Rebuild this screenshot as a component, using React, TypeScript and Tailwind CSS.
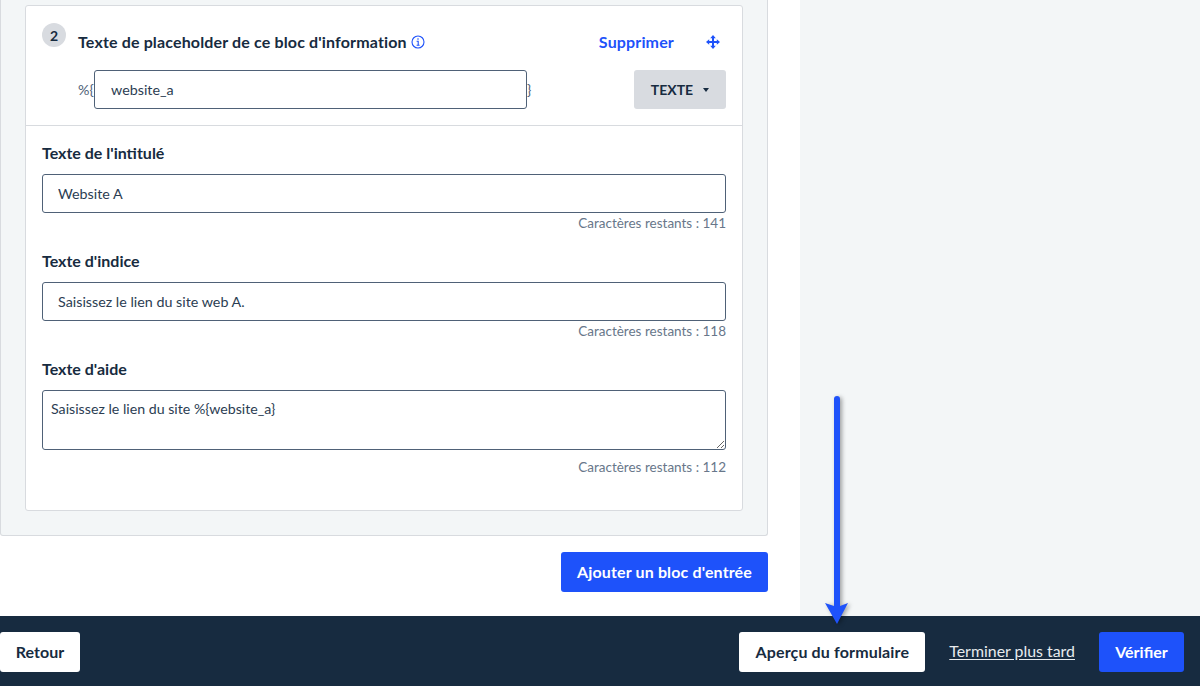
import React from "react";

const F = "font-['Lato','Liberation_Sans',sans-serif]";

function Field({ label, value, count }: { label: string; value: string; count: number }) {
  return (
    <div className="flex flex-col">
      <label className="mb-[11px] text-[16px] leading-[20px] font-bold text-[#172b40]">{label}</label>
      <input
        readOnly
        value={value}
        className="h-[39px] w-full rounded-[3px] border border-[#4f6177] bg-white pb-px pl-[15px] pr-4 text-[14.3px] text-[#2b3d52] outline-none"
      />
      <div className="h-[20px] text-right text-[13.5px] leading-[20px] text-[#68778a]">Caractères restants : {count}</div>
    </div>
  );
}

export default function App() {
  return (
    <div className={`${F} relative flex h-[686px] w-[1200px] flex-col overflow-hidden bg-white`}>
      <main className="flex h-[616px] w-full">
        <section className="w-[800px] bg-white">
          <div className="w-[768px] rounded-b-[3px] border-x border-b border-[#d8dbdf] bg-[#f3f6f7] px-6 pt-[5px] pb-6">
            <div className="rounded-[3px] border border-[#d8dbdf] bg-white">
              <div className="h-[120px] border-b border-[#d8dbdf] px-4 pt-[17px]">
                <div className="flex h-[47px] items-start">
                  <div className="flex h-6 w-6 items-center justify-center rounded-full bg-[#d8dbe0] text-[14px] font-bold text-[#172b40]">2</div>
                  <div className="ml-3 mt-[9px] flex items-center text-[16px] leading-[20px] font-bold tracking-[0.15px] text-[#172b40]">
                    Texte de placeholder de ce bloc d'information
                    <svg className="ml-[4px]" width="14" height="14" viewBox="0 0 14 14" fill="none" stroke="#1e52fa" strokeWidth="1.1">
                      <circle cx="7" cy="7" r="6" />
                      <path d="M5.6 6.2H7.2V10M5.6 10.2H8.6" />
                      <circle cx="7" cy="4" r="0.8" fill="#1e52fa" stroke="none" />
                    </svg>
                  </div>
                  <button className="ml-auto mr-[32px] mt-[9px] text-[16px] leading-[20px] font-bold tracking-[0.15px] text-[#1e52fa]">Supprimer</button>
                  <svg className="mr-[6px] mt-[12px]" width="14" height="14" viewBox="0 0 14 14" fill="#1e52fa">
                    <path d="M7 0 9.8 3.2H8V6H10.8V4.2L14 7 10.8 9.8V8H8V10.8H9.8L7 14 4.2 10.8H6V8H3.2V9.8L0 7 3.2 4.2V6H6V3.2H4.2Z" />
                  </svg>
                </div>
                <div className="flex items-center pl-9">
                  <span className="w-4 text-[14.3px] text-[#4f6177]">%{"{"}</span>
                  <input
                    readOnly
                    value="website_a"
                    className="h-[39px] w-[433px] rounded-[3px] border border-[#4f6177] bg-white px-4 pb-px text-[14.3px] text-[#2b3d52] outline-none"
                  />
                  <span className="text-[14.3px] text-[#4f6177]">{"}"}</span>
                  <button className="ml-auto flex h-[39px] w-[92px] items-center justify-center rounded-[3px] bg-[#d8dbe0] pb-px text-[14px] font-bold text-[#172b40]">
                    TEXTE
                    <svg className="ml-[10px] mt-px" width="6" height="4" viewBox="0 0 6 4" fill="#172b40">
                      <path d="M0 0H6L3 4Z" />
                    </svg>
                  </button>
                </div>
              </div>
              <div className="flex flex-col gap-[18px] px-4 pt-[17px] pb-[33px]">
                <Field label="Texte de l'intitulé" value="Website A" count={141} />
                <Field label="Texte d'indice" value="Saisissez le lien du site web A." count={118} />
                <div className="flex flex-col">
                  <label className="mb-[11px] text-[16px] leading-[20px] font-bold text-[#172b40]">Texte d'aide</label>
                  <textarea
                    readOnly
                    value="Saisissez le lien du site %{website_a}"
                    className="block h-[60px] w-full rounded-[3px] border border-[#4f6177] bg-white px-2 py-[8px] text-[14.2px] leading-[20px] text-[#2b3d52] outline-none"
                  />
                  <div className="mt-[7px] h-[20px] text-right text-[13.5px] leading-[20px] text-[#68778a]">Caractères restants : 112</div>
                </div>
              </div>
            </div>
          </div>
          <div className="mt-4 flex w-[768px] justify-end">
            <button className="h-10 w-[207px] rounded-[3px] bg-[#1e52fa] pb-px text-[16px] font-bold tracking-[0.15px] text-white">Ajouter un bloc d'entrée</button>
          </div>
        </section>
        <aside className="flex-1 bg-[#f3f6f7]" />
      </main>
      <footer className="flex h-[70px] items-start bg-[#172b40] pt-4 pr-4">
        <button className="h-10 w-20 rounded-[3px] bg-white pb-px text-[16px] font-bold text-[#172b40]">Retour</button>
        <button className="ml-auto h-10 w-[186px] rounded-[3px] bg-white pb-px text-[16px] font-bold tracking-[0.15px] text-[#172b40]">Aperçu du formulaire</button>
        <a className="ml-6 mt-[9px] text-[15.9px] leading-[20px] text-[#e8ebee] underline underline-offset-2">Terminer plus tard</a>
        <button className="ml-6 h-10 w-[85px] rounded-[3px] bg-[#1e52fa] pb-px text-[16px] font-bold text-white">Vérifier</button>
      </footer>
      <svg className="absolute left-[820px] top-[392px] drop-shadow-[2px_1px_2px_rgba(0,0,0,0.35)]" width="34" height="238" viewBox="0 0 34 238">
        <path d="M14 7a3 3 0 0 1 6 0V214L28 211 17 232 5 211 14 214Z" fill="#1e52fa" />
      </svg>
    </div>
  );
}
